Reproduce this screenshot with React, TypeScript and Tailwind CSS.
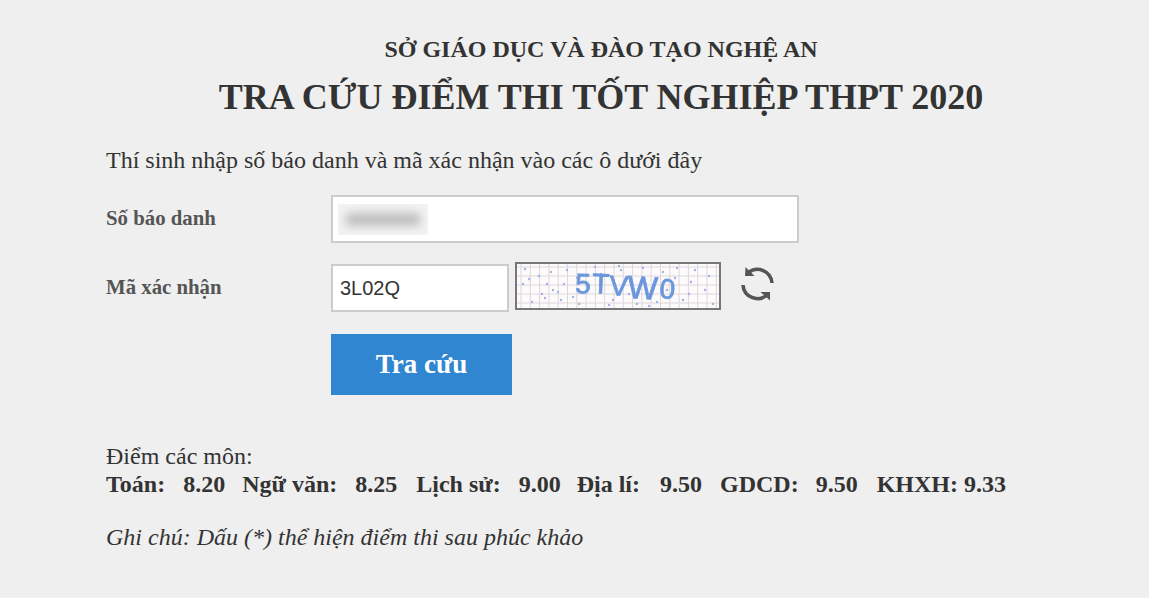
import { useState } from 'react';

const dots = [
  [8, 5], [22, 12], [34, 8], [41, 28], [50, 6], [62, 40], [70, 22], [84, 10], [96, 36], [104, 6],
  [112, 30], [126, 4], [132, 42], [146, 8], [158, 14], [166, 36], [178, 6], [188, 26], [196, 40], [15, 38],
  [28, 34], [47, 20], [56, 33], [78, 3], [92, 41], [120, 40], [150, 26], [174, 18], [192, 12], [6, 20],
  [25, 30], [30, 20], [36, 26], [12, 15], [60, 14], [44, 36], [102, 2], [160, 4], [172, 30], [140, 38],
];

const letters = [
  { c: '5', x: 58, y: 29, r: 2, s: 28 },
  { c: 'T', x: 75, y: 29, r: 2, s: 28 },
  { c: 'V', x: 92, y: 31, r: 3, s: 28 },
  { c: 'W', x: 110, y: 34, r: 3, s: 32 },
  { c: '0', x: 142, y: 34, r: 4, s: 28 },
];

function Captcha() {
  const cols = Array.from({ length: 22 }, (_, i) => 4 + i * 9.3);
  const rows = [3, 12, 21, 30, 39];
  return (
    <svg width="206" height="48" viewBox="0 0 202 44" className="block border-2 border-[#777] bg-[#fcfafb]">
      <g className="blur-[0.5px]">
        {cols.map((x) => (
          <line key={x} x1={x} y1="0" x2={x} y2="44" stroke="#ddd7db" strokeWidth="1" />
        ))}
        {rows.map((y) => (
          <line key={y} x1="0" y1={y} x2="202" y2={y} stroke="#ddd7db" strokeWidth="1" />
        ))}
        {dots.map(([x, y]) => (
          <circle key={`${x}-${y}`} cx={x} cy={y} r="1.2" fill="#9fb6e2" />
        ))}
        {letters.map((l) => (
          <text
            key={l.c}
            x={l.x}
            y={l.y}
            fontFamily="'Liberation Sans', sans-serif"
            fontSize={l.s}
            fill="#6b97dc"
            stroke="#6b97dc"
            strokeWidth="0.8"
            transform={`rotate(${l.r} ${l.x} ${l.y})`}
          >
            {l.c}
          </text>
        ))}
      </g>
    </svg>
  );
}

function RefreshIcon() {
  return (
    <svg width="45" height="45" viewBox="0 0 45 45" fill="none" className="block">
      <path d="M13 11 A14.5 14.5 0 0 1 37 21" stroke="#555" strokeWidth="3.6" />
      <path d="M32 33 A14.5 14.5 0 0 1 8 23" stroke="#555" strokeWidth="3.6" />
      <path d="M10.5 5 L10 14 L19.5 14 Z" fill="#555" />
      <path d="M35 38.5 L35 30 L25.5 30 Z" fill="#555" />
    </svg>
  );
}

function App() {
  const [code, setCode] = useState('3L02Q');

  return (
    <div className="h-[598px] overflow-hidden bg-[#efefef] pl-[106px] pt-[34px] font-['Liberation_Serif',serif] text-[#333]">
      <div className="w-[990px] text-center">
        <h2 className="h-[30px] text-[24px] font-bold leading-[30px]">SỞ GIÁO DỤC VÀ ĐÀO TẠO NGHỆ AN</h2>
        <h1 className="mt-[10px] h-[46px] text-[36px] font-bold leading-[46px]">TRA CỨU ĐIỂM THI TỐT NGHIỆP THPT 2020</h1>
      </div>

      <p className="mt-[25px] text-[24px] leading-[30px]">Thí sinh nhập số báo danh và mã xác nhận vào các ô dưới đây</p>

      <div className="mt-[20px] flex items-center">
        <label className="w-[225px] pb-[2px] text-[20.8px] font-bold text-[#555]">Số báo danh</label>
        <div className="flex h-[48px] w-[468px] items-center overflow-hidden border-2 border-[#ccc] bg-white pl-[5px]">
          <div className="h-[31px] w-[90px] overflow-hidden bg-[#f3f3f3] px-[8px] py-[9px]">
            <div className="h-full w-full bg-[#bdbdbd] blur-[5px]" />
          </div>
        </div>
      </div>

      <div className="mt-[21px] flex items-start">
        <label className="w-[225px] pt-[7px] text-[20.8px] font-bold text-[#555]">Mã xác nhận</label>
        <input
          value={code}
          onChange={(e) => setCode(e.target.value)}
          className="h-[48px] w-[178px] border-2 border-[#ccc] bg-white pl-[7px] font-['Liberation_Sans',sans-serif] text-[20px] text-[#333] outline-none"
        />
        <div className="ml-[6px] mt-[-2px]">
          <Captcha />
        </div>
        <div className="ml-[14px] mt-[-2px]">
          <RefreshIcon />
        </div>
      </div>

      <button className="ml-[225px] mt-[22px] block h-[61px] w-[181px] bg-[#3086d0] text-[27px] font-bold text-white">
        Tra cứu
      </button>

      <p className="mt-[47px] text-[24px] leading-[28px]">Điểm các môn:</p>
      <p className="flex text-[24px] font-bold leading-[28px]">
        <span>Toán:</span>
        <span className="ml-[18px]">8.20</span>
        <span className="ml-[17px]">Ngữ văn:</span>
        <span className="ml-[18px]">8.25</span>
        <span className="ml-[19px]">Lịch sử:</span>
        <span className="ml-[18px]">9.00</span>
        <span className="ml-[16px]">Địa lí:</span>
        <span className="ml-[20px]">9.50</span>
        <span className="ml-[18px]">GDCD:</span>
        <span className="ml-[17px]">9.50</span>
        <span className="ml-[19px]">KHXH: 9.33</span>
      </p>

      <p className="mt-[24px] text-[24px] italic leading-[30px]">Ghi chú: Dấu (*) thể hiện điểm thi sau phúc khảo</p>
    </div>
  );
}

export default App;
